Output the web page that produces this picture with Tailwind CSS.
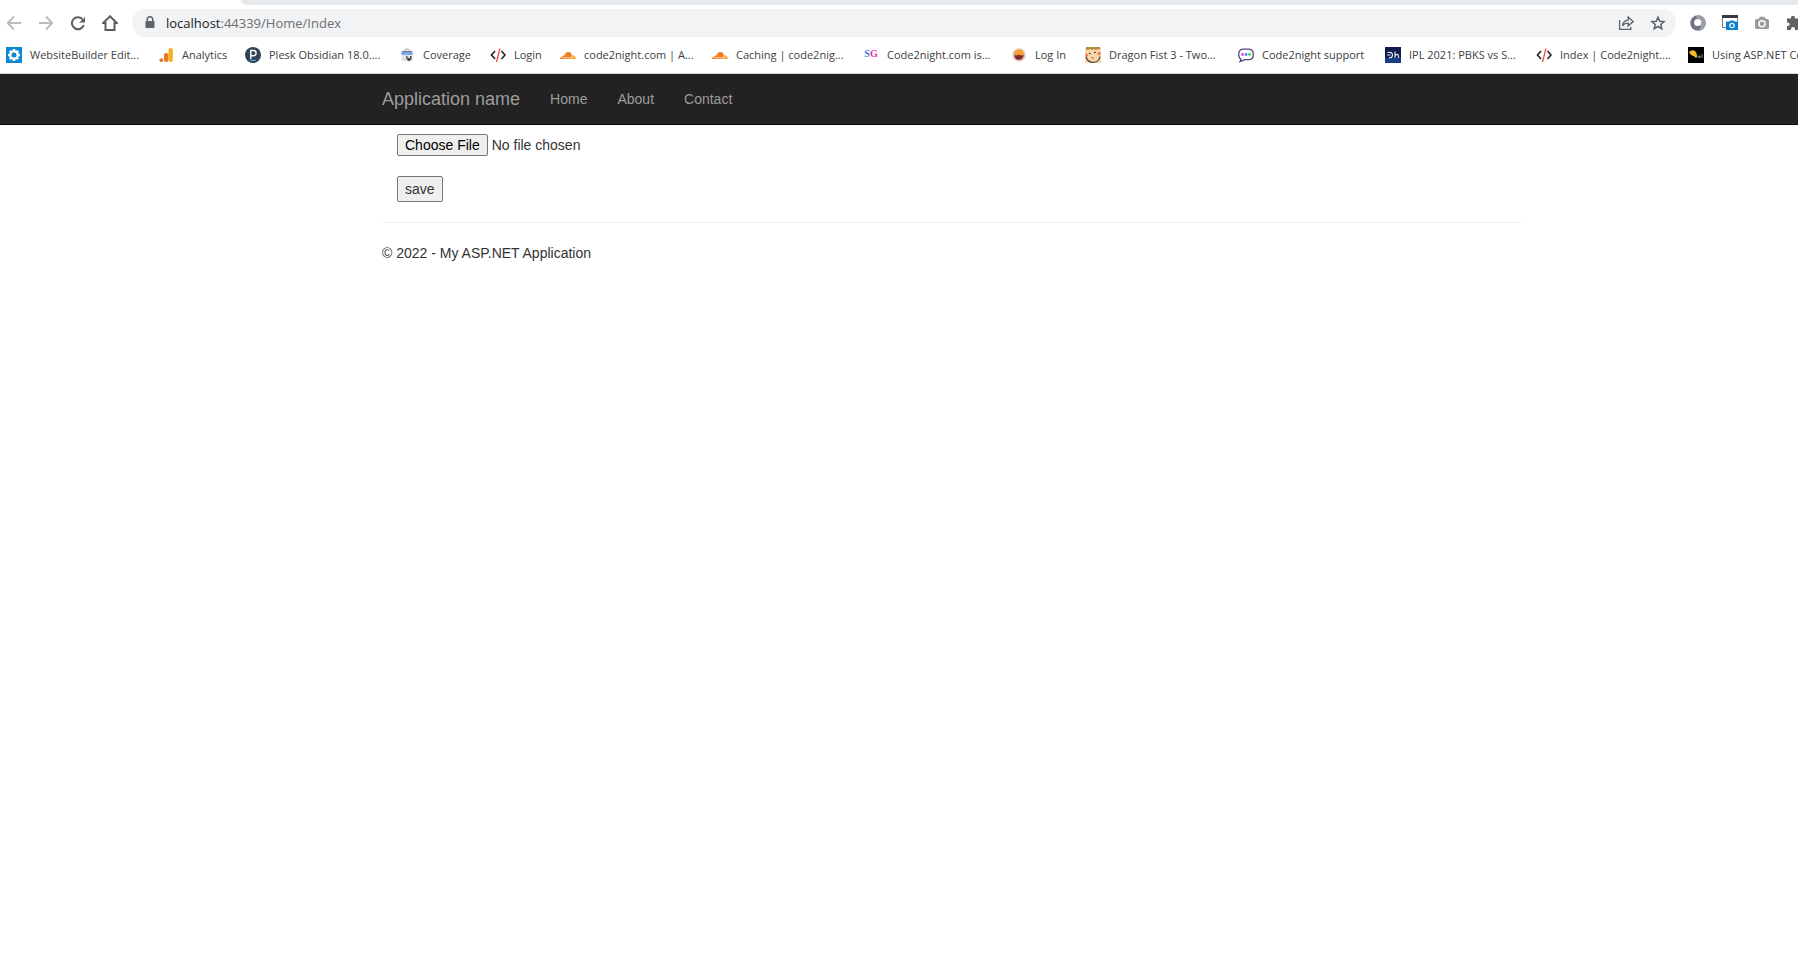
<!DOCTYPE html>
<html lang="en">
<head>
<meta charset="utf-8">
<title>Index - My ASP.NET Application</title>
<script src="https://cdn.jsdelivr.net/npm/@tailwindcss/browser@4"></script>
</head>
<body class="min-h-screen overflow-x-hidden bg-white font-['Liberation_Sans',Arial,sans-serif] text-sm leading-5 text-[#333]">

<!-- Browser chrome -->
<header class="border-b border-[#d6d6d6] font-['Open_Sans','Noto_Sans',sans-serif]">
  <div class="ml-[241px] h-[5px] rounded-bl-lg bg-[#e7eaed]"></div>

  <div class="flex h-9 items-center pl-[6px]">
    <nav class="flex gap-4" aria-label="Navigation">
      <button aria-label="Back"><svg class="size-4" viewBox="0 0 16 16" fill="none" stroke="#babcbe" stroke-width="2"><path d="M15 8H2.500M8 1.500 1.800 8 8 14.500"/></svg></button>
      <button aria-label="Forward"><svg class="size-4" viewBox="0 0 16 16" fill="none" stroke="#babcbe" stroke-width="2"><path d="M1 8h12.500M8 1.500 14.200 8 8 14.500"/></svg></button>
      <button aria-label="Reload"><svg class="size-4" viewBox="0 0 16 16"><path d="M13.600 4.200A7 7 0 1 0 14.700 10h-2.100A5 5 0 1 1 12 5.200L9 7.500h6V1z" fill="#5a5e63"/></svg></button>
      <button aria-label="Home"><svg class="size-4" viewBox="0 0 16 16" fill="none" stroke="#5a5e63" stroke-width="2"><path d="M3.500 8v7h9V8h2.300L8 1.300 1.200 8z"/></svg></button>
    </nav>
    <div class="ml-[14px] flex h-7 flex-1 items-center rounded-full bg-[#f1f3f4] pr-[10px] pl-3">
      <svg class="h-4 w-3" viewBox="0 0 12 16"><path d="M2.500 6V4.600a3.500 3.500 0 0 1 7 0V6h.3q.7 0 .7.800v5.400q0 .8-.8.800H2.300q-.8 0-.8-.8V6.800q0-.8.8-.8zM4 6h4V4.600a2 2 0 0 0-4 0z" fill="#5f6368"/></svg>
      <a href="#" class="ml-[10px] flex-1 text-[13px] text-[#6b6f73]"><span class="text-[#202124]">localhost</span>:44339/Home/Index</a>
      <div class="flex gap-4">
        <button aria-label="Share"><svg class="size-4" viewBox="0 0 16 16" fill="none" stroke="#5f6368" stroke-width="1.300"><path d="M1.600 5v9.400h11.200V12M4.500 10.800C5 7.500 7 5.400 10.200 5.200V2l4.900 4.600-4.900 4.400V8.200C7.500 8.200 5.800 9 4.500 10.800z"/></svg></button>
        <button aria-label="Bookmark"><svg class="size-4" viewBox="0 0 16 16" fill="none" stroke="#5f6368" stroke-width="1.500"><path d="m8 2.200 1.700 4 4.400.4-3.300 2.900 1 4.300L8 11.500l-3.800 2.300 1-4.300-3.300-2.900 4.400-.4z"/></svg></button>
      </div>
    </div>
    <div class="flex w-[122px] gap-4 overflow-hidden pl-[14px]">
      <button aria-label="Extension"><svg class="size-4" viewBox="0 0 16 16"><circle cx="8" cy="8" r="7.800" fill="#6f7683"/><path d="M8 .2a7.800 7.800 0 0 1 0 15.600q3.500-2.500 3-7Q10.500 4 6 3q0-2 2-2.800z" fill="#9a9fa8"/><circle cx="7.700" cy="7.500" r="3.600" fill="#fff"/></svg></button>
      <button aria-label="Window capture"><svg class="size-4" viewBox="0 0 16 16"><path d="M0 0h16v3H0z" fill="#333b44"/><path d="M.5 3v9.500H5M15.500 3v3" fill="none" stroke="#777"/><path d="M4 6.500h3.500l1-1h3l1 1H16V15H4z" fill="#0a7fd5"/><circle cx="10" cy="10.500" r="2.200" fill="none" stroke="#fff" stroke-width="1.200"/></svg></button>
      <button aria-label="Screenshot"><svg class="size-4" viewBox="0 0 16 16"><path d="M2.500 4H4.500L6 1.800h4.500L12 4h1.500Q15 4 15 5.500v7q0 1.500-1.500 1.500h-11Q1 14 1 12.500v-7Q1 4 2.500 4z" fill="#9b9b9b"/><circle cx="8" cy="8.800" r="3" fill="#9b9b9b" stroke="#fff" stroke-width="1.500"/></svg></button>
      <button aria-label="Extensions" class="shrink-0"><svg class="size-4" viewBox="0 0 16 16"><path d="M1 3.500h4V2.800a2 2 0 0 1 4 0v.7h4v4h1a2 2 0 0 1 0 4h-1V15H9v-1a2 2 0 0 0-4 0v1H1v-4h.8a1.800 1.800 0 0 0 0-3.600H1z" fill="#5f6368"/></svg></button>
    </div>
  </div>

  <nav class="flex h-8 items-center overflow-hidden pb-[4px] pl-[6px] text-[11px] whitespace-nowrap text-[#3c4043] *:flex *:shrink-0 *:items-center *:gap-2" aria-label="Bookmarks">
    <a href="#" class="w-[152px]"><svg class="size-4" viewBox="0 0 16 16"><path d="M0 0h16v16H0z" fill="#0c87d2"/><circle cx="8" cy="8" r="3.700" fill="none" stroke="#fff" stroke-width="2.400"/><path d="M8 2v2M8 12v2M2 8h2M12 8h2M3.800 3.800l1.400 1.400M10.800 10.800l1.400 1.400M12.200 3.800l-1.400 1.400M5.200 10.800l-1.400 1.400" stroke="#fff" stroke-width="2.400"/></svg>WebsiteBuilder Edit...</a>
    <a href="#" class="w-[87px]"><svg class="size-4" viewBox="0 0 16 16"><rect x="10.500" y="1" width="4.300" height="14" rx="2" fill="#fbae17"/><rect x="6" y="6" width="4.300" height="9" rx="2" fill="#e8772a"/><circle cx="3.300" cy="13.200" r="1.900" fill="#e8772a"/></svg>Analytics</a>
    <a href="#" class="w-[154px]"><svg class="size-4" viewBox="0 0 16 16"><circle cx="8" cy="8" r="8" fill="#334255"/><path d="M5.800 12V3.500h2.700a2.600 2.600 0 0 1 0 5.200H5.800" fill="none" stroke="#fff" stroke-width="1.400"/><path d="M5 13.300h6" stroke="#53bce6"/></svg>Plesk Obsidian 18.0....</a>
    <a href="#" class="w-[91px]"><svg class="size-4" viewBox="0 0 16 16"><path d="M5.500 4q0-2 2.500-2t2.500 2" fill="none" stroke="#999"/><rect x="2.500" y="3.500" width="11" height="10.500" rx="1" fill="#dfe3e8"/><path d="M3 5h10l1 2.500H2z" fill="#3f82e8"/><path d="M3 4.500h10" stroke="#777"/><path d="M3 6h10" stroke="#a9c8fa"/><path d="M7 9h1.500v2H11V9h1.500v3L10 14.500 7.500 12z" fill="#484848"/></svg>Coverage</a>
    <a href="#" class="w-[70px]"><svg class="size-4" viewBox="0 0 16 16" fill="none" stroke-width="1.600"><path d="M5 4 1.500 8 5 12M11.500 4 15 8l-3.500 4" stroke="#222"/><path d="M10 1.500 6.500 15" stroke="#ec4049" stroke-width="1.200"/></svg>Login</a>
    <a href="#" class="w-[152px]"><svg class="size-4" viewBox="0 0 16 16"><path d="M0 12q0-2.200 2.300-2.400.5-1.400 2-1 1-3.600 4-3.600 3.200 0 3.500 3.300L11.300 12z" fill="#f38020"/><path d="M12.300 8.300q3.500 0 3.700 3.700h-4.300z" fill="#fbad41"/><path d="M2 10.700h9.500" stroke="#fff" stroke-width=".6"/></svg>code2night.com | A...</a>
    <a href="#" class="w-[151px]"><svg class="size-4" viewBox="0 0 16 16"><path d="M0 12q0-2.200 2.300-2.400.5-1.400 2-1 1-3.600 4-3.600 3.200 0 3.500 3.300L11.300 12z" fill="#f38020"/><path d="M12.300 8.300q3.500 0 3.700 3.700h-4.300z" fill="#fbad41"/><path d="M2 10.700h9.500" stroke="#fff" stroke-width=".6"/></svg>Caching | code2nig...</a>
    <a href="#" class="w-[148px]"><span class="flex h-4 w-4 justify-center font-['Liberation_Serif',serif] text-[10px] leading-[13px] font-bold text-[#2d80dc]">S<span class="text-[#f02e9a]">G</span></span>Code2night.com is...</a>
    <a href="#" class="w-[74px]"><svg class="size-4" viewBox="0 0 16 16"><circle cx="8" cy="8" r="6.800" fill="#e6cdc7"/><circle cx="8" cy="7.500" r="5.200" fill="#f3a13a"/><path d="M3.500 8q2 1 4.500-.5Q10.500 9 12.500 8q0 4.800-4.500 4.800T3.500 8z" fill="#782a38"/></svg>Log In</a>
    <a href="#" class="w-[153px]"><svg class="size-4" viewBox="0 0 16 16"><path d="M0 1h16v15H0z" fill="#f9d7ae"/><path d="M1 0h14v2.500l-2-.5-2 1-2-1-2 1-2-1-2 1-2-.5z" fill="#b18b3b"/><path d="M1 9.500q1.500 5.800 7 5.800 6 0 7-5.800" fill="none" stroke="#5e4938" stroke-width="1.300"/><circle cx="4.800" cy="6.500" r=".8" fill="#222"/><circle cx="10" cy="5.500" r=".8" fill="#222"/><circle cx="1.700" cy="8" r="1.600" fill="#ef8265"/><circle cx="14" cy="6.500" r="1.800" fill="#ef8265"/><path d="M6 11.200q1.500-1.500 3 0" fill="none" stroke="#b35442"/></svg>Dragon Fist 3 - Two...</a>
    <a href="#" class="w-[147px]"><svg class="size-4" viewBox="0 0 16 16"><path d="M3 12.500Q.7 11 .7 7.500q0-5 4.300-5.300h6q4.300.3 4.300 5.300T11 12.600H7L2 14.500z" fill="#fff" stroke="#55427a" stroke-width="1.300"/><circle cx="4.500" cy="7.500" r="1.400" fill="#e548df"/><circle cx="8" cy="7.500" r="1.400" fill="#3d8bf0"/><circle cx="11.500" cy="7.500" r="1.400" fill="#41d85d"/></svg>Code2night support</a>
    <a href="#" class="w-[151px]"><svg class="size-4" viewBox="0 0 16 16"><path d="M0 0h16v16H0z" fill="#101b50"/><path d="M0 11h16v5H0z" fill="#1c3b86"/><path d="M2.500 5.500q5-1 5 2.500 0 3-3.500 2.700M2 8h3.500M10 4.500V11M10 8.500q3-2.500 3.500.5v2" fill="none" stroke="#e4e8f4" stroke-width="1.200"/></svg>IPL 2021: PBKS vs S...</a>
    <a href="#" class="w-[152px]"><svg class="size-4" viewBox="0 0 16 16" fill="none" stroke-width="1.600"><path d="M5 4 1.500 8 5 12M11.500 4 15 8l-3.500 4" stroke="#222"/><path d="M10 1.500 6.500 15" stroke="#ec4049" stroke-width="1.200"/></svg>Index | Code2night....</a>
    <a href="#"><svg class="size-4" viewBox="0 0 16 16"><path d="M0 0h16v16H0z"/><path d="M1 5q3-3 6-1 2 1.500 2 6-2 1.500-3-1Q3 9 1 5z" fill="#fbb626"/><path d="M10 8.500v2.500M11.500 10h1.500M11.500 8.500v2.500M14 7v4" stroke="#aaa" stroke-width=".8"/></svg>Using ASP.NET Core</a>
  </nav>
</header>

<!-- Page -->
<nav class="border-b border-[#080808] bg-[#222] text-[#9d9d9d]" aria-label="Main">
  <div class="ml-[382px] flex h-[50px] max-w-[1140px] items-center">
    <a href="#" class="pr-[15px] text-lg leading-5">Application name</a>
    <a href="#" class="px-[15px]">Home</a>
    <a href="#" class="px-[15px]">About</a>
    <a href="#" class="px-[15px]">Contact</a>
  </div>
</nav>
<main class="ml-[382px] max-w-[1140px]">
  <form class="flex flex-col items-start gap-5 px-[15px] pt-[9px]">
    <input type="file" aria-label="File" class="h-[22px] text-sm leading-[18px] file:mr-1 file:h-[22px] file:rounded-[2px] file:border file:border-solid file:border-[#767676] file:bg-[#efefef] file:px-[7px] file:text-black">
    <button type="button" class="h-[26px] rounded-[2px] border border-[#767676] bg-[#efefef] px-[7px]">save</button>
  </form>
  <hr class="my-5 border-[#eee]">
  <footer><p>© 2022 - My ASP.NET Application</p></footer>
</main>
</body>
</html>
